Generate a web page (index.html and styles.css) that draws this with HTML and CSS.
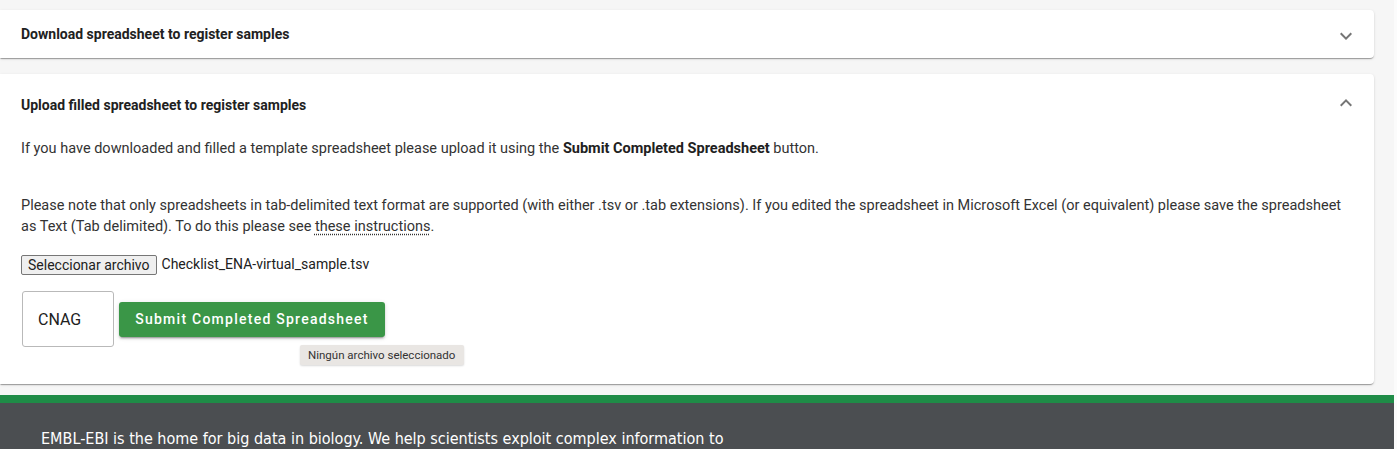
FILE: index.html
```html
<!DOCTYPE html>
<html>
<head>
<meta charset="utf-8">
<link rel="stylesheet" href="styles.css">
</head>
<body>
<div class="page">
  <main class="content">
    <section class="card">
      <div class="card-header">
        <span class="card-title">Download spreadsheet to register samples</span>
        <svg class="chev" width="24" height="24" viewBox="0 0 24 24"><path d="M7.41 8.59 12 13.17l4.59-4.58L18 10l-6 6-6-6z" fill="#757575"/></svg>
      </div>
    </section>
    <section class="card card-open">
      <div class="card-header tall">
        <span class="card-title">Upload filled spreadsheet to register samples</span>
        <svg class="chev" width="24" height="24" viewBox="0 0 24 24"><path d="M7.41 15.41 12 10.83l4.59 4.58L18 14l-6-6-6 6z" fill="#757575"/></svg>
      </div>
      <div class="card-body">
        <p class="p1">If you have downloaded and filled a template spreadsheet please upload it using the <b>Submit Completed Spreadsheet</b> button.</p>
        <p class="p2">Please note that only spreadsheets in tab-delimited text format are supported (with either .tsv or .tab extensions). If you edited the spreadsheet in Microsoft Excel (or equivalent) please save the spreadsheet as Text (Tab delimited). To do this please see <a class="dotted" href="#">these instructions</a>.</p>
        <div class="file-row">
          <span class="file-btn">Seleccionar archivo</span>
          <span class="file-name">Checklist_ENA-virtual_sample.tsv</span>
        </div>
        <div class="submit-row">
          <div class="center-box">CNAG</div>
          <div class="btn-wrap">
            <button class="submit">Submit Completed Spreadsheet</button>
            <span class="tooltip">Ningún archivo seleccionado</span>
          </div>
        </div>
      </div>
    </section>
  </main>
  <footer class="footer">
    <p>EMBL-EBI is the home for big data in biology. We help scientists exploit complex information to</p>
  </footer>
</div>
</body>
</html>
```
FILE: styles.css
```css
html, body { margin: 0; padding: 0; }
body {
  background: #f6f6f6;
  font-family: Roboto, "Liberation Sans", Arial, sans-serif;
  color: #212121;
  overflow: hidden;
  height: 449px;
  width: 1397px;
}
.page {
  width: 1394px;
  border-right: 3px solid #fbfbfb;
}
.content {
  padding: 10px 20px 11px 0;
  display: flex;
  flex-direction: column;
  gap: 16px;
}
.card {
  background: #fff;
  border-radius: 0 4px 4px 0;
  box-shadow: 0 2px 1px -1px rgba(0,0,0,0.2), 0 1px 1px 0 rgba(0,0,0,0.14), 0 1px 3px 0 rgba(0,0,0,0.12);
}
.card-header {
  height: 48px;
  display: flex;
  align-items: center;
  justify-content: space-between;
  padding: 0 16px 0 21px;
}
.card-header.tall { height: 62px; }
.card-title {
  font-size: 14px;
  font-weight: 700;
  color: #212121;
}
.chev { display: block; margin-top: 4px; }
.tall .chev { margin-top: -4px; }
.card-body {
  padding: 0 21px 37px 21px;
  font-size: 14.5px;
  line-height: 21px;
  color: #333;
}
.card-body p { margin: 0; }
.p1 { padding-top: 2px; }
.p1 b { color: #212121; }
.p2 { margin-top: 36px !important; }
.dotted {
  color: #333;
  text-decoration: underline dotted #333;
  text-underline-offset: 3px;
}
.file-row {
  margin-top: 17px;
  display: flex;
  align-items: center;
  gap: 5px;
  font-size: 14px;
  color: #212121;
}
.file-btn {
  display: inline-block;
  border: 1px solid #767676;
  background: #efefef;
  border-radius: 2px;
  padding: 0 6px;
  line-height: 18px;
  font-size: 14px;
}
.submit-row {
  margin-top: 16px;
  display: flex;
  align-items: center;
  gap: 5px;
}
.center-box {
  width: 92px;
  height: 56px;
  margin-left: 1px;
  box-sizing: border-box;
  border: 1px solid #b9b9b9;
  border-radius: 3px;
  padding-left: 15px;
  display: flex;
  align-items: center;
  font-size: 16px;
  color: #212121;
}
.btn-wrap { position: relative; }
.submit {
  display: block;
  background: #3a9647;
  color: #fff;
  border: none;
  border-radius: 3px;
  height: 35px;
  width: 266px;
  font-family: Roboto, "Liberation Sans", Arial, sans-serif;
  font-size: 14px;
  font-weight: 500;
  letter-spacing: 1.25px;
  box-shadow: 0 3px 1px -2px rgba(0,0,0,0.2), 0 2px 2px 0 rgba(0,0,0,0.14), 0 1px 5px 0 rgba(0,0,0,0.12);
}
.tooltip {
  position: absolute;
  left: 181px;
  top: 43px;
  background: #e9e6e3;
  color: #333;
  font-size: 11.5px;
  line-height: 20px;
  padding: 0 9px 0 8px;
  border-radius: 2px;
  white-space: nowrap;
  box-shadow: 0 1px 2px rgba(0,0,0,0.15);
}
.footer {
  border-top: 8px solid #1f8c47;
  background: #4b4e51;
  height: 60px;
  padding: 0 0 0 41px;
}
.footer p {
  margin: 0;
  padding-top: 24px;
  color: #ffffff;
  font-family: "DejaVu Sans Condensed", "Liberation Sans Narrow", "Roboto", sans-serif;
  font-stretch: condensed;
  font-weight: 300;
  font-size: 16px;
  line-height: 24px;
}
```
